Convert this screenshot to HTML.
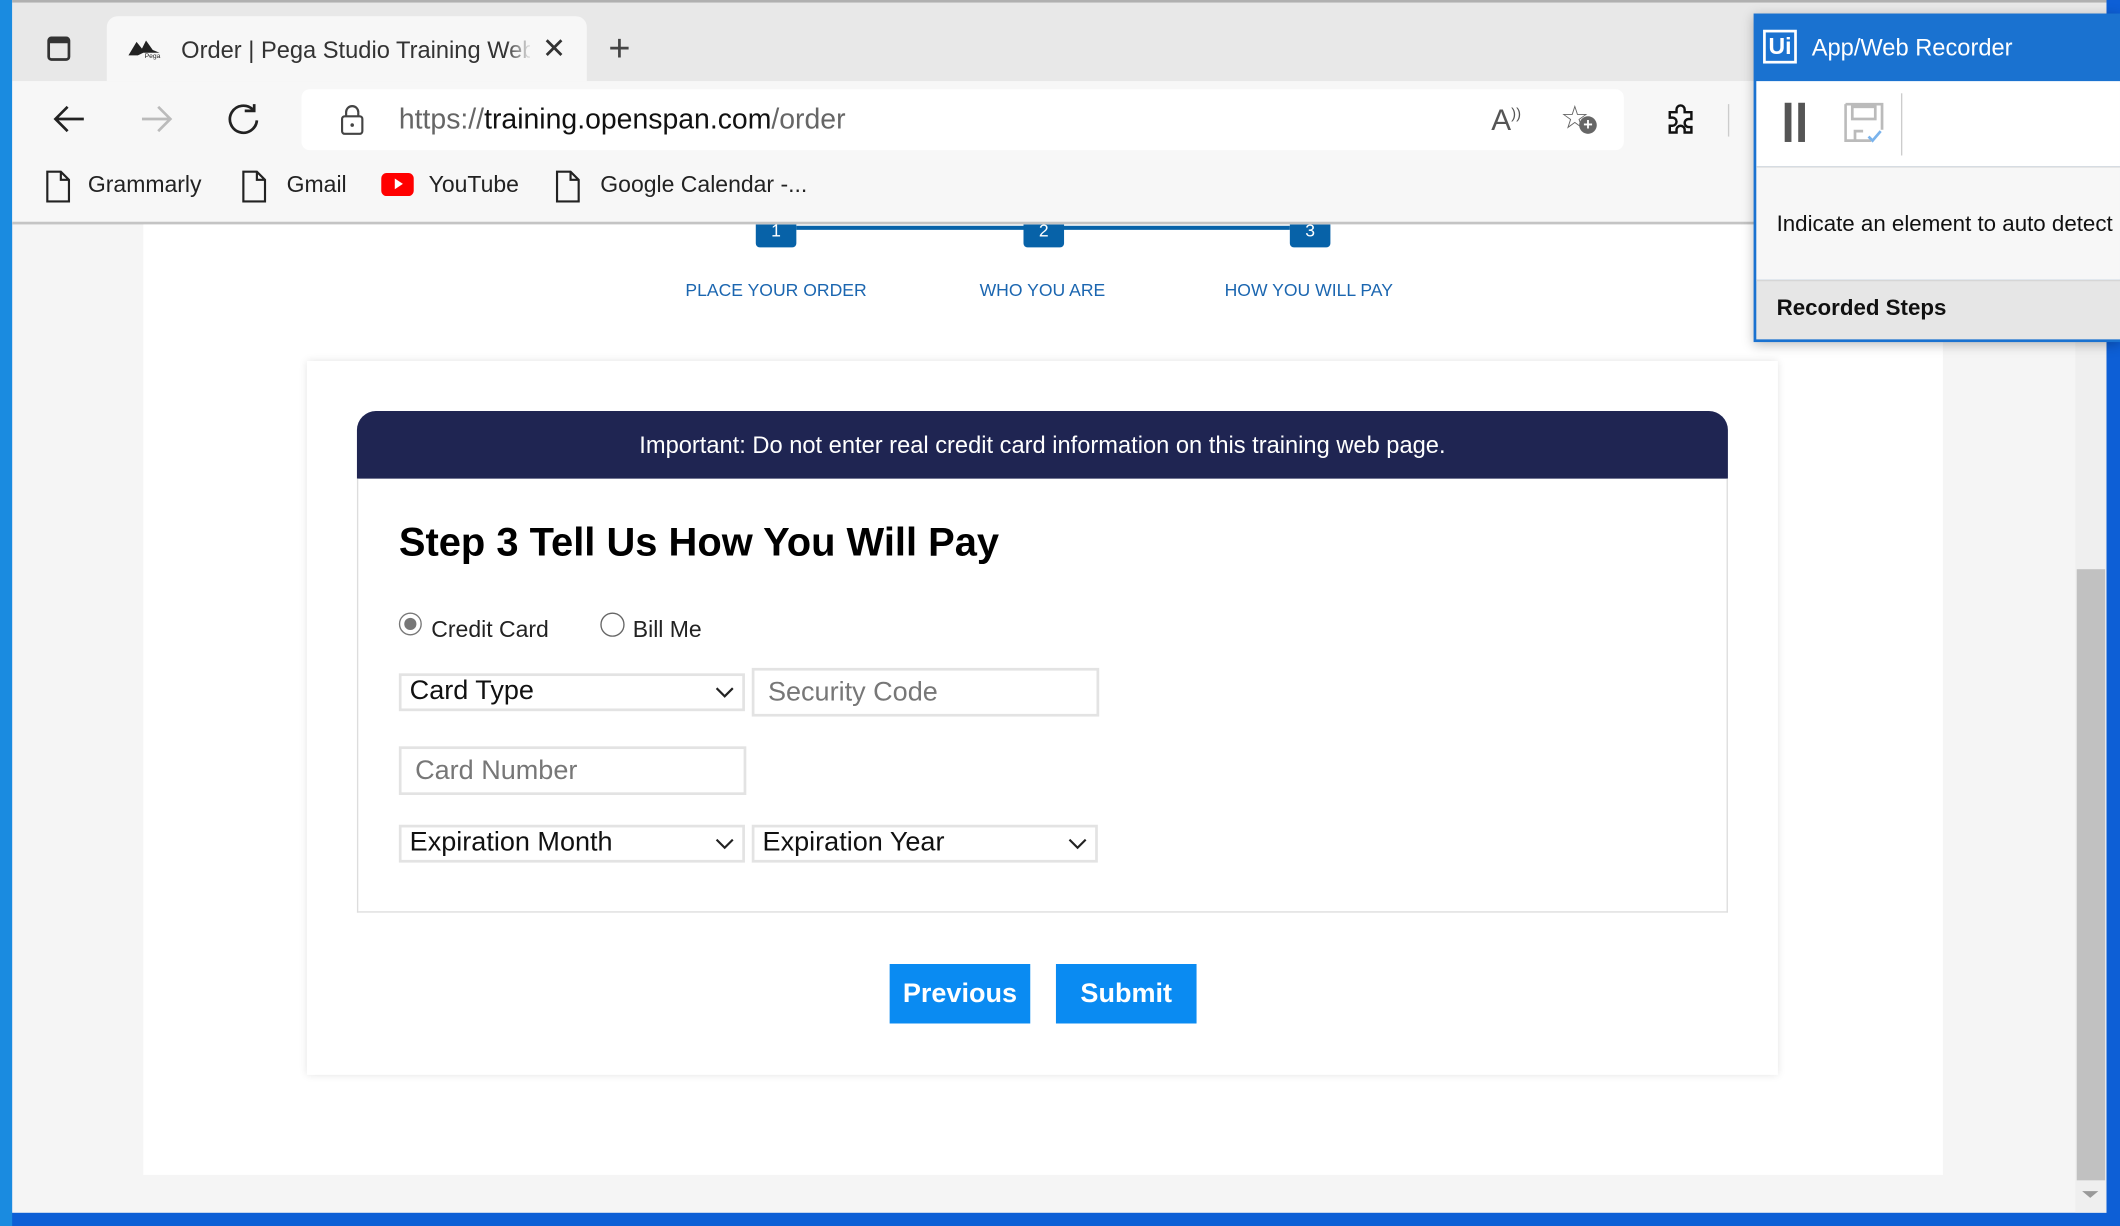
<!DOCTYPE html>
<html><head><meta charset="utf-8"><style>
html,body{margin:0;padding:0;width:2120px;height:1226px;overflow:hidden;background:#1160d0;}
#w{position:absolute;left:0;top:0;width:1568px;height:907px;transform:scale(1.35204);transform-origin:0 0;font-family:"Liberation Sans",sans-serif;overflow:hidden;background:#0d5fd6;}
.a{position:absolute;}
.ui{font-family:"Liberation Sans",sans-serif;color:#222;}
.sel{position:absolute;border:2px solid #e3e3e3;background:#fff;font-size:20px;color:#111;box-sizing:border-box;padding-left:6px;line-height:23px;}
.sel svg{position:absolute;right:6px;top:7px;}
.inp{position:absolute;border:2px solid #e3e3e3;background:#fff;font-size:20px;color:#777;box-sizing:border-box;padding-left:10px;}
.btn{position:absolute;background:#0a8bf2;color:#fff;font-weight:bold;font-size:20px;text-align:center;line-height:44px;height:44px;top:713px;}
.lbl{position:absolute;top:207px;font-size:13px;color:#1b66b0;width:200px;text-align:center;}
.stp{position:absolute;top:166px;width:30px;height:17px;background:#0762a8;border-radius:0 0 3px 3px;color:#fff;font-size:13px;text-align:center;line-height:10px;}
</style></head><body><div id="w">
<div class="a" style="left:0;top:0;width:9px;height:907px;background:#1a8be0"></div>
<div class="a" style="left:9px;top:0;width:1549px;height:897px;background:#f5f5f5;overflow:hidden">
 <div class="a" style="left:0;top:0;width:1549px;height:2px;background:#b0b0b0"></div>
 <div class="a" style="left:0;top:2px;width:1549px;height:58px;background:#e8e8e8"></div>
 <div class="a" style="left:26px;top:27px;width:17px;height:18px;border:2px solid #333;border-radius:3px;box-sizing:border-box;border-top-width:5px"></div>
 <div class="a" style="left:70px;top:12px;width:355px;height:48px;background:#f7f7f7;border-radius:8px 8px 0 0"></div>
 <svg class="a" style="left:85px;top:27px" width="26" height="18" viewBox="0 0 26 18"><path d="M1 14 L7 4 L11 9 L14 3 L19 10 L24 12 L12 12 L8 14Z" fill="#222"/><text x="13" y="16" font-size="5" fill="#222" font-family="Liberation Sans">Pega</text></svg>
 <div class="a ui" style="left:125px;top:27px;font-size:17.5px;color:#333;width:258px;overflow:hidden;white-space:nowrap;">Order | Pega Studio Training Web</div>
 <div class="a" style="left:365px;top:22px;width:20px;height:28px;background:linear-gradient(90deg,rgba(247,247,247,0),#f7f7f7)"></div>
 <div class="a ui" style="left:392px;top:24px;font-size:21px;color:#333">✕</div>
 <div class="a" style="left:441px;top:26px;font-size:28px;color:#444;line-height:20px;font-weight:300">+</div>
 <div class="a" style="left:0;top:60px;width:1549px;height:105px;background:#f7f7f7"></div>
 <svg class="a" style="left:28px;top:76px" width="28" height="24" viewBox="0 0 28 24"><path d="M25 12H4M13 3L4 12L13 21" stroke="#222" stroke-width="2" fill="none"/></svg>
 <svg class="a" style="left:93px;top:76px" width="28" height="24" viewBox="0 0 28 24"><path d="M3 12H24M15 3L24 12L15 21" stroke="#bbb" stroke-width="2" fill="none"/></svg>
 <svg class="a" style="left:158px;top:75px" width="28" height="28" viewBox="0 0 28 28"><path d="M20 6A10 10 0 1 0 23 14" stroke="#222" stroke-width="2" fill="none"/><path d="M14 5H21V0" stroke="#222" stroke-width="2" fill="none" transform="translate(0,2)"/></svg>
 <div class="a" style="left:214px;top:66px;width:978px;height:45px;background:#fff;border-radius:6px"></div>
 <svg class="a" style="left:240px;top:76px" width="24" height="26" viewBox="0 0 24 26"><rect x="4" y="10" width="15" height="13" rx="2" stroke="#444" stroke-width="1.6" fill="none"/><path d="M7 10V7A4.5 4.5 0 0 1 16 7V10" stroke="#444" stroke-width="1.6" fill="none"/><circle cx="11.5" cy="16.5" r="1.3" fill="#444"/></svg>
 <div class="a ui" style="left:286px;top:77px;font-size:21px;color:#666;white-space:nowrap">https://<span style="color:#111">training.openspan.com</span>/order</div>
 <div class="a ui" style="left:1094px;top:76px;font-size:22px;color:#555">A<sup style="font-size:11px">))</sup></div>
 <div class="a" style="left:1145px;top:73px;font-size:24px;color:#666">☆</div>
 <div class="a" style="left:1159px;top:86px;width:13px;height:13px;border-radius:50%;background:#666;color:#fff;font-size:12px;line-height:13px;text-align:center;font-weight:bold">+</div>
 <svg class="a" style="left:1222px;top:76px" width="26" height="26" viewBox="0 0 26 26"><path d="M9 5A3 3 0 0 1 15 5V7H20V12H18A3 3 0 0 0 18 18H20V22H15V20A3 3 0 0 0 9 20V22H4V17H6A3 3 0 0 0 6 11H4V7H9Z" stroke="#111" stroke-width="1.8" fill="none"/></svg>
 <div class="a" style="left:1269px;top:77px;width:1px;height:24px;background:#ccc"></div>
 <svg class="a" style="left:24px;top:125px" width="20" height="26" viewBox="0 0 20 26"><path d="M2 2H12L18 8V24H2Z M12 2V8H18" stroke="#222" stroke-width="1.6" fill="none"/></svg>
 <div class="a ui" style="left:56px;top:127px;font-size:17px;color:#222">Grammarly</div>
 <svg class="a" style="left:169px;top:125px" width="20" height="26" viewBox="0 0 20 26"><path d="M2 2H12L18 8V24H2Z M12 2V8H18" stroke="#222" stroke-width="1.6" fill="none"/></svg>
 <div class="a ui" style="left:203px;top:127px;font-size:17px;color:#222">Gmail</div>
 <div class="a" style="left:273px;top:128px;width:24px;height:17px;background:#f00;border-radius:4px"></div>
 <div class="a" style="left:283px;top:132px;width:0;height:0;border-left:6px solid #fff;border-top:4.5px solid transparent;border-bottom:4.5px solid transparent"></div>
 <div class="a ui" style="left:308px;top:127px;font-size:17px;color:#222">YouTube</div>
 <svg class="a" style="left:401px;top:125px" width="20" height="26" viewBox="0 0 20 26"><path d="M2 2H12L18 8V24H2Z M12 2V8H18" stroke="#222" stroke-width="1.6" fill="none"/></svg>
 <div class="a ui" style="left:435px;top:127px;font-size:17px;color:#222">Google Calendar -...</div>
 <div class="a" style="left:0;top:164px;width:1549px;height:2px;background:#c4c4c4"></div>
 <div class="a" style="left:97px;top:166px;width:1331px;height:703px;background:#fff"></div>
 <div class="a" style="left:1526px;top:166px;width:23px;height:731px;background:#efefef"></div>
 <div class="a" style="left:1527px;top:421px;width:21px;height:452px;background:#c1c1c1"></div>
 <div class="a" style="left:1531px;top:881px;border-top:5px solid #999;border-left:6px solid transparent;border-right:6px solid transparent"></div>
</div>
<div class="a" style="left:589px;top:167px;width:168px;height:3px;background:#0762a8"></div>
<div class="a" style="left:786px;top:167px;width:168px;height:3px;background:#0762a8"></div>
<div class="stp" style="left:559px">1</div>
<div class="stp" style="left:757px">2</div>
<div class="stp" style="left:954px">3</div>
<div class="lbl" style="left:474px">PLACE YOUR ORDER</div>
<div class="lbl" style="left:671px">WHO YOU ARE</div>
<div class="lbl" style="left:868px">HOW YOU WILL PAY</div>
<div class="a" style="left:227px;top:267px;width:1088px;height:528px;background:#fff;box-shadow:0 0 6px rgba(0,0,0,0.12)"></div>
<div class="a" style="left:264px;top:304px;width:1014px;height:50px;background:#1f2552;border-radius:14px 14px 0 0;color:#fff;font-size:17.5px;text-align:center;line-height:50px">Important: Do not enter real credit card information on this training web page.</div>
<div class="a" style="left:264px;top:354px;width:1014px;height:321px;border:1px solid #ddd;border-top:none;box-sizing:border-box"></div>
<div class="a" style="left:295px;top:385px;font-size:29.5px;font-weight:bold;color:#000">Step 3 Tell Us How You Will Pay</div>
<div class="a" style="left:295px;top:453px;width:17px;height:17px;border-radius:50%;border:1px solid #777;box-sizing:border-box;background:#fff"></div>
<div class="a" style="left:299px;top:457px;width:9px;height:9px;border-radius:50%;background:#777"></div>
<div class="a" style="left:319px;top:456px;font-size:17px;color:#222">Credit Card</div>
<div class="a" style="left:444px;top:453px;width:18px;height:18px;border-radius:50%;border:1px solid #666;box-sizing:border-box"></div>
<div class="a" style="left:468px;top:456px;font-size:17px;color:#222">Bill Me</div>
<div class="sel" style="left:295px;top:498px;width:256px;height:28px">Card Type<svg width="14" height="10"><path d="M1 2L7 8L13 2" stroke="#222" stroke-width="1.6" fill="none"/></svg></div>
<div class="inp" style="left:556px;top:494px;width:257px;height:36px;line-height:32px">Security Code</div>
<div class="inp" style="left:295px;top:552px;width:257px;height:36px;line-height:32px">Card Number</div>
<div class="sel" style="left:295px;top:610px;width:256px;height:28px">Expiration Month<svg width="14" height="10"><path d="M1 2L7 8L13 2" stroke="#222" stroke-width="1.6" fill="none"/></svg></div>
<div class="sel" style="left:556px;top:610px;width:256px;height:28px">Expiration Year<svg width="14" height="10"><path d="M1 2L7 8L13 2" stroke="#222" stroke-width="1.6" fill="none"/></svg></div>
<div class="btn" style="left:658px;width:104px">Previous</div>
<div class="btn" style="left:781px;width:104px">Submit</div>
<div class="a" style="left:1297px;top:10px;width:271px;height:243px;background:#1a72d0;box-shadow:0 2px 8px rgba(0,0,0,0.25)"></div>
<div class="a" style="left:1299px;top:60px;width:269px;height:63px;background:#fff"></div>
<div class="a" style="left:1299px;top:123px;width:269px;height:84px;background:#f7f7f7;border-top:1px solid #ddd;box-sizing:border-box"></div>
<div class="a" style="left:1299px;top:207px;width:269px;height:44px;background:#e6e6e6;border-top:1px solid #d6d6d6;box-sizing:border-box"></div>
<div class="a" style="left:1304px;top:22px;width:25px;height:25px;border:2px solid #fff;box-sizing:border-box;background:#1a72d0;color:#fff;font-size:17px;line-height:21px;text-align:center;font-weight:bold">Ui</div>
<div class="a ui" style="left:1340px;top:25px;font-size:17.5px;color:#fff">App/Web Recorder</div>
<div class="a" style="left:1320px;top:76px;width:5px;height:29px;background:#555"></div>
<div class="a" style="left:1330px;top:76px;width:5px;height:29px;background:#555"></div>
<svg class="a" style="left:1364px;top:76px" width="30" height="30" viewBox="0 0 30 30"><path d="M1 1H28V20M1 1V28H20" stroke="#bbb" stroke-width="2" fill="none"/><rect x="6" y="3" width="17" height="9" stroke="#bbb" stroke-width="2" fill="none"/><path d="M8 28V21H14" stroke="#bbb" stroke-width="2" fill="none"/><path d="M18 25L21 28L27 21" stroke="#7ab3ec" stroke-width="2" fill="none"/></svg>
<div class="a" style="left:1406px;top:69px;width:1px;height:46px;background:#ccc"></div>
<div class="a ui" style="left:1314px;top:157px;font-size:16.5px;color:#111;white-space:nowrap">Indicate an element to auto detect</div>
<div class="a ui" style="left:1314px;top:219px;font-size:16.5px;color:#111;font-weight:bold">Recorded Steps</div>
</div></body></html>
